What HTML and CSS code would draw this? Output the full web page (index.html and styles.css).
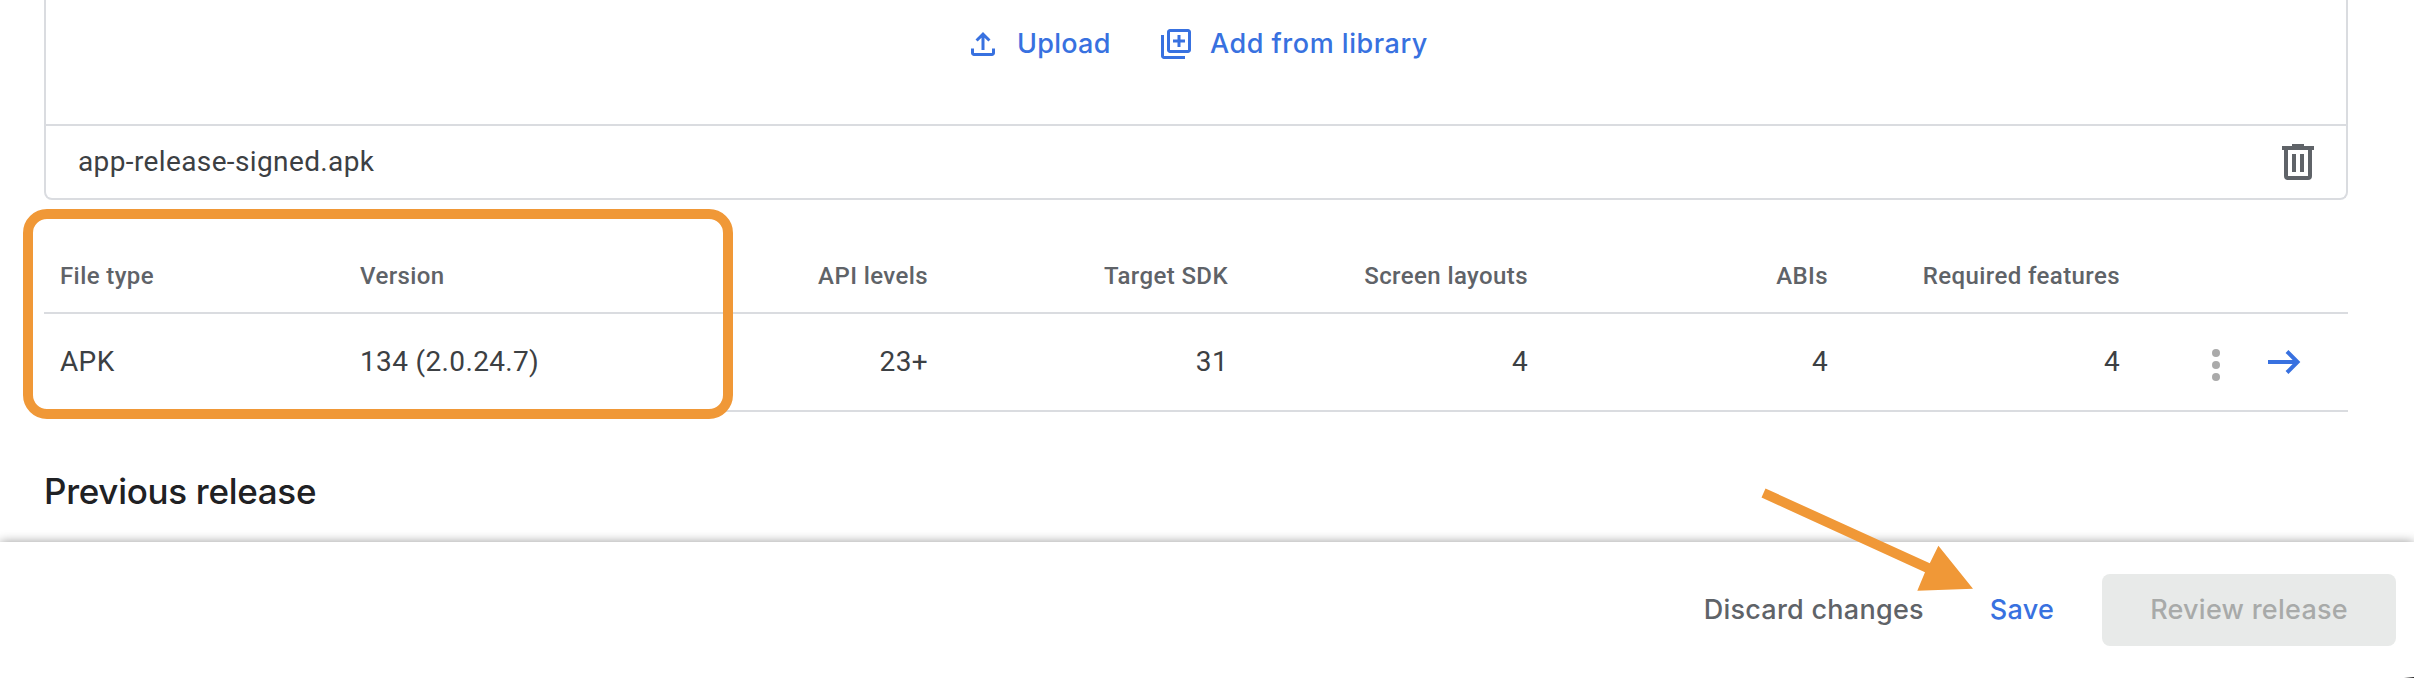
FILE: index.html
```
<!DOCTYPE html>
<html lang="en">
<head>
<meta charset="utf-8">
<title>Create release</title>
<link rel="stylesheet" href="styles.css">
</head>
<body>
<main class="content">
  <section class="bundle-card">
    <div class="bundle-actions">
      <a class="action"><svg class="action-icon" viewBox="0 0 24 24"><path d="M4 15v3c0 1.100.9 2 2 2h12c1.100 0 2-.9 2-2v-3h-2v3H6v-3H4zm3-6 1.410 1.410L11 7.830V16h2V7.830l2.590 2.580L17 9l-5-5-5 5z"/></svg><span class="label upload">Upload</span></a>
      <a class="action"><svg class="action-icon" viewBox="0 0 24 24"><path fill-rule="evenodd" d="M4 6H2v14c0 1.100.9 2 2 2h14v-2H4V6zm4-4h12c1.100 0 2 .9 2 2v12c0 1.100-.9 2-2 2H8c-1.100 0-2-.9-2-2V4c0-1.100.9-2 2-2zm0 2v12h12V4H8zm5 2h2v3h3v2h-3v3h-2v-3h-3V9h3V6z"/></svg><span class="label library">Add from library</span></a>
    </div>
    <div class="file-row">
      <span class="file-name">app-release-signed.apk</span>
      <svg class="trash" viewBox="0 0 32 36"><path fill-rule="evenodd" d="M10 0h12v2h10v4h-2v26q0 4-4 4H6q-4 0-4-4V6H0V2h10zM6 6v26h20V6zM10 10h4v18h-4zM18 10h4v18h-4z"/></svg>
    </div>
  </section>
  <section class="table">
    <div class="row head">
      <span>File type</span><span>Version</span><span class="num">API levels</span><span class="num">Target SDK</span><span class="num">Screen layouts</span><span class="num">ABIs</span><span class="num">Required features</span><span></span>
    </div>
    <div class="row data">
      <span>APK</span><span>134 (2.0.24.7)</span><span class="num">23+</span><span class="num">31</span><span class="num">4</span><span class="num">4</span><span class="num">4</span>
      <span class="row-actions">
        <svg class="dots" viewBox="0 0 8 32"><circle cx="4" cy="4" r="4"/><circle cx="4" cy="16" r="4"/><circle cx="4" cy="28" r="4"/></svg>
        <svg class="open" viewBox="0 0 32 24"><path d="M0 12h29M19 1.500 29.500 12 19 22.500"/></svg>
      </span>
    </div>
    <div class="highlight"></div>
  </section>
  <h2 class="heading">Previous release</h2>
</main>
<footer class="footer">
  <a class="label discard">Discard changes</a>
  <a class="label save">Save</a>
  <button class="label review" disabled>Review release</button>
  <div class="window-corner"></div>
</footer>
<svg class="pointer" viewBox="0 0 220 110"><path d="M10.500 8.500 174.800 83.300 183.400 65.700 218 108.700 162.300 110.700 170 92.300 6.500 17.500z"/></svg>
</body>
</html>
```
FILE: styles.css
```
* { box-sizing: border-box; }
body {
  margin: 0;
  width: 2414px;
  height: 678px;
  overflow: hidden;
  display: flex;
  flex-direction: column;
  position: relative;
  background: #fff;
  color: #3c4043;
  font: 28px/36px Roboto, sans-serif;
}
svg { display: block; flex: none; overflow: visible; }
.content { height: 542px; padding: 0 66px 0 44px; }
.bundle-card {
  height: 200px;
  border: 2px solid #dadce0;
  border-top: 0;
  border-radius: 0 0 8px 8px;
}
.bundle-actions {
  height: 124px;
  padding: 26px 0 0 919px;
  display: flex;
  align-items: flex-start;
}
.action { display: flex; color: #3871e0; }
.action:first-child { width: 193px; }
.action-icon { width: 36px; height: 36px; margin-right: 16px; fill: currentColor; }
.label { font-family: Inter, sans-serif; font-weight: 500; font-size: 27px; line-height: 36px; letter-spacing: .25px; white-space: nowrap; }
.library { letter-spacing: .52px; }
.file-row {
  height: 74px;
  border-top: 2px solid #dadce0;
  padding: 0 32px;
  display: flex;
  align-items: center;
  justify-content: space-between;
}
.file-name { letter-spacing: .38px; }
.trash { width: 32px; height: 36px; fill: #5f6368; }
.table { position: relative; height: 212px; }
.row {
  display: grid;
  grid-template-columns: 300px 300px 300px 300px 300px 300px 292px 212px;
  align-items: center;
  border-bottom: 2px solid #dadce0;
}
.row > span { padding: 0 16px; white-space: nowrap; }
.head { height: 114px; padding-top: 40px; font-size: 24px; font-weight: 500; letter-spacing: .4px; color: #5f6368; }
.data { height: 98px; letter-spacing: .35px; }
.num { text-align: right; }
.row > .row-actions { display: flex; align-items: center; padding: 0 48px 0 76px; justify-content: space-between; }
.dots { width: 8px; height: 32px; fill: #aaa; margin-top: 6px; }
.open { width: 32px; height: 24px; fill: none; stroke: #3871e0; stroke-width: 4; }
.highlight {
  position: absolute;
  left: -21px;
  top: 9px;
  width: 710px;
  height: 210px;
  border: 10px solid #f09837;
  border-radius: 24px;
}
.heading { margin: 0; padding-top: 57px; font: 500 35px/44px Inter, sans-serif; letter-spacing: -.3px; color: #202124; }
.footer {
  position: relative;
  height: 136px;
  padding: 0 18px;
  background: #fff;
  box-shadow: 0 0 10px rgba(0, 0, 0, .4);
  display: flex;
  align-items: center;
  justify-content: flex-end;
}
.discard { color: #5f6368; margin-right: 66px; }
.save { color: #3871e0; margin-right: 48px; }
.review {
  width: 294px;
  height: 72px;
  border: 0;
  border-radius: 8px;
  padding: 0;
  background: #e8eae9;
  color: #a8aaa9;
}
.window-corner {
  position: absolute;
  right: 0;
  bottom: 0;
  width: 10px;
  height: 1px;
  background: linear-gradient(to right, #fff, #222);
}
.pointer { position: absolute; left: 1755px; top: 480px; width: 220px; height: 110px; fill: #f09837; }
```
